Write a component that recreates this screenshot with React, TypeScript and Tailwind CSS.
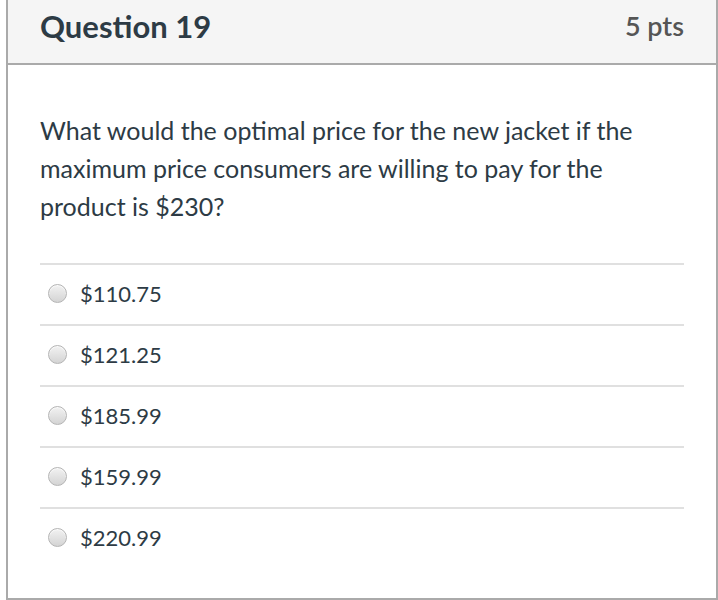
import React from 'react';

const ANSWERS = ['$110.75', '$121.25', '$185.99', '$159.99', '$220.99'];

const Radio: React.FC = () => (
  <span className="block w-[19px] h-[19px] rounded-full border border-[#b4b4b4] bg-gradient-to-b from-[#f2f2f2] to-[#d4d4d4] shadow-[inset_0_1px_1px_rgba(255,255,255,0.8)]"></span>
);

const App: React.FC = () => {
  return (
    <div className="w-[718px] h-[600px] bg-white pl-[6px] font-['Lato','Liberation_Sans',sans-serif]">
      <div className="w-[712px] h-[600px] border-x-2 border-b-2 border-[#aaaaaa] flex flex-col">
        {/* header */}
        <div className="h-[65px] bg-[#f5f5f5] border-b-2 border-[#aaaaaa] flex items-center justify-between px-8 pb-[10px]">
          <span className="text-[31px] font-bold text-[#2d3b45]">Question 19</span>
          <span className="text-[27px] font-semibold text-[#555555]">5 pts</span>
        </div>

        <div className="px-8 pt-[46px]">
          <p className="text-[25px] leading-[38px] text-[#2d3b45]">
            What would the optimal price for the new jacket if the maximum price consumers are willing to pay for the product is $230?
          </p>

          <div className="mt-[38px]">
            {ANSWERS.map((a) => (
              <div key={a} className="border-t-2 border-[#e0e0e0] h-[61px] flex items-center pl-[8px] pb-[3px]">
                <Radio />
                <span className="ml-[13px] text-[22px] text-[#2d3b45]">{a}</span>
              </div>
            ))}
          </div>
        </div>
      </div>
    </div>
  );
};

export default App;
